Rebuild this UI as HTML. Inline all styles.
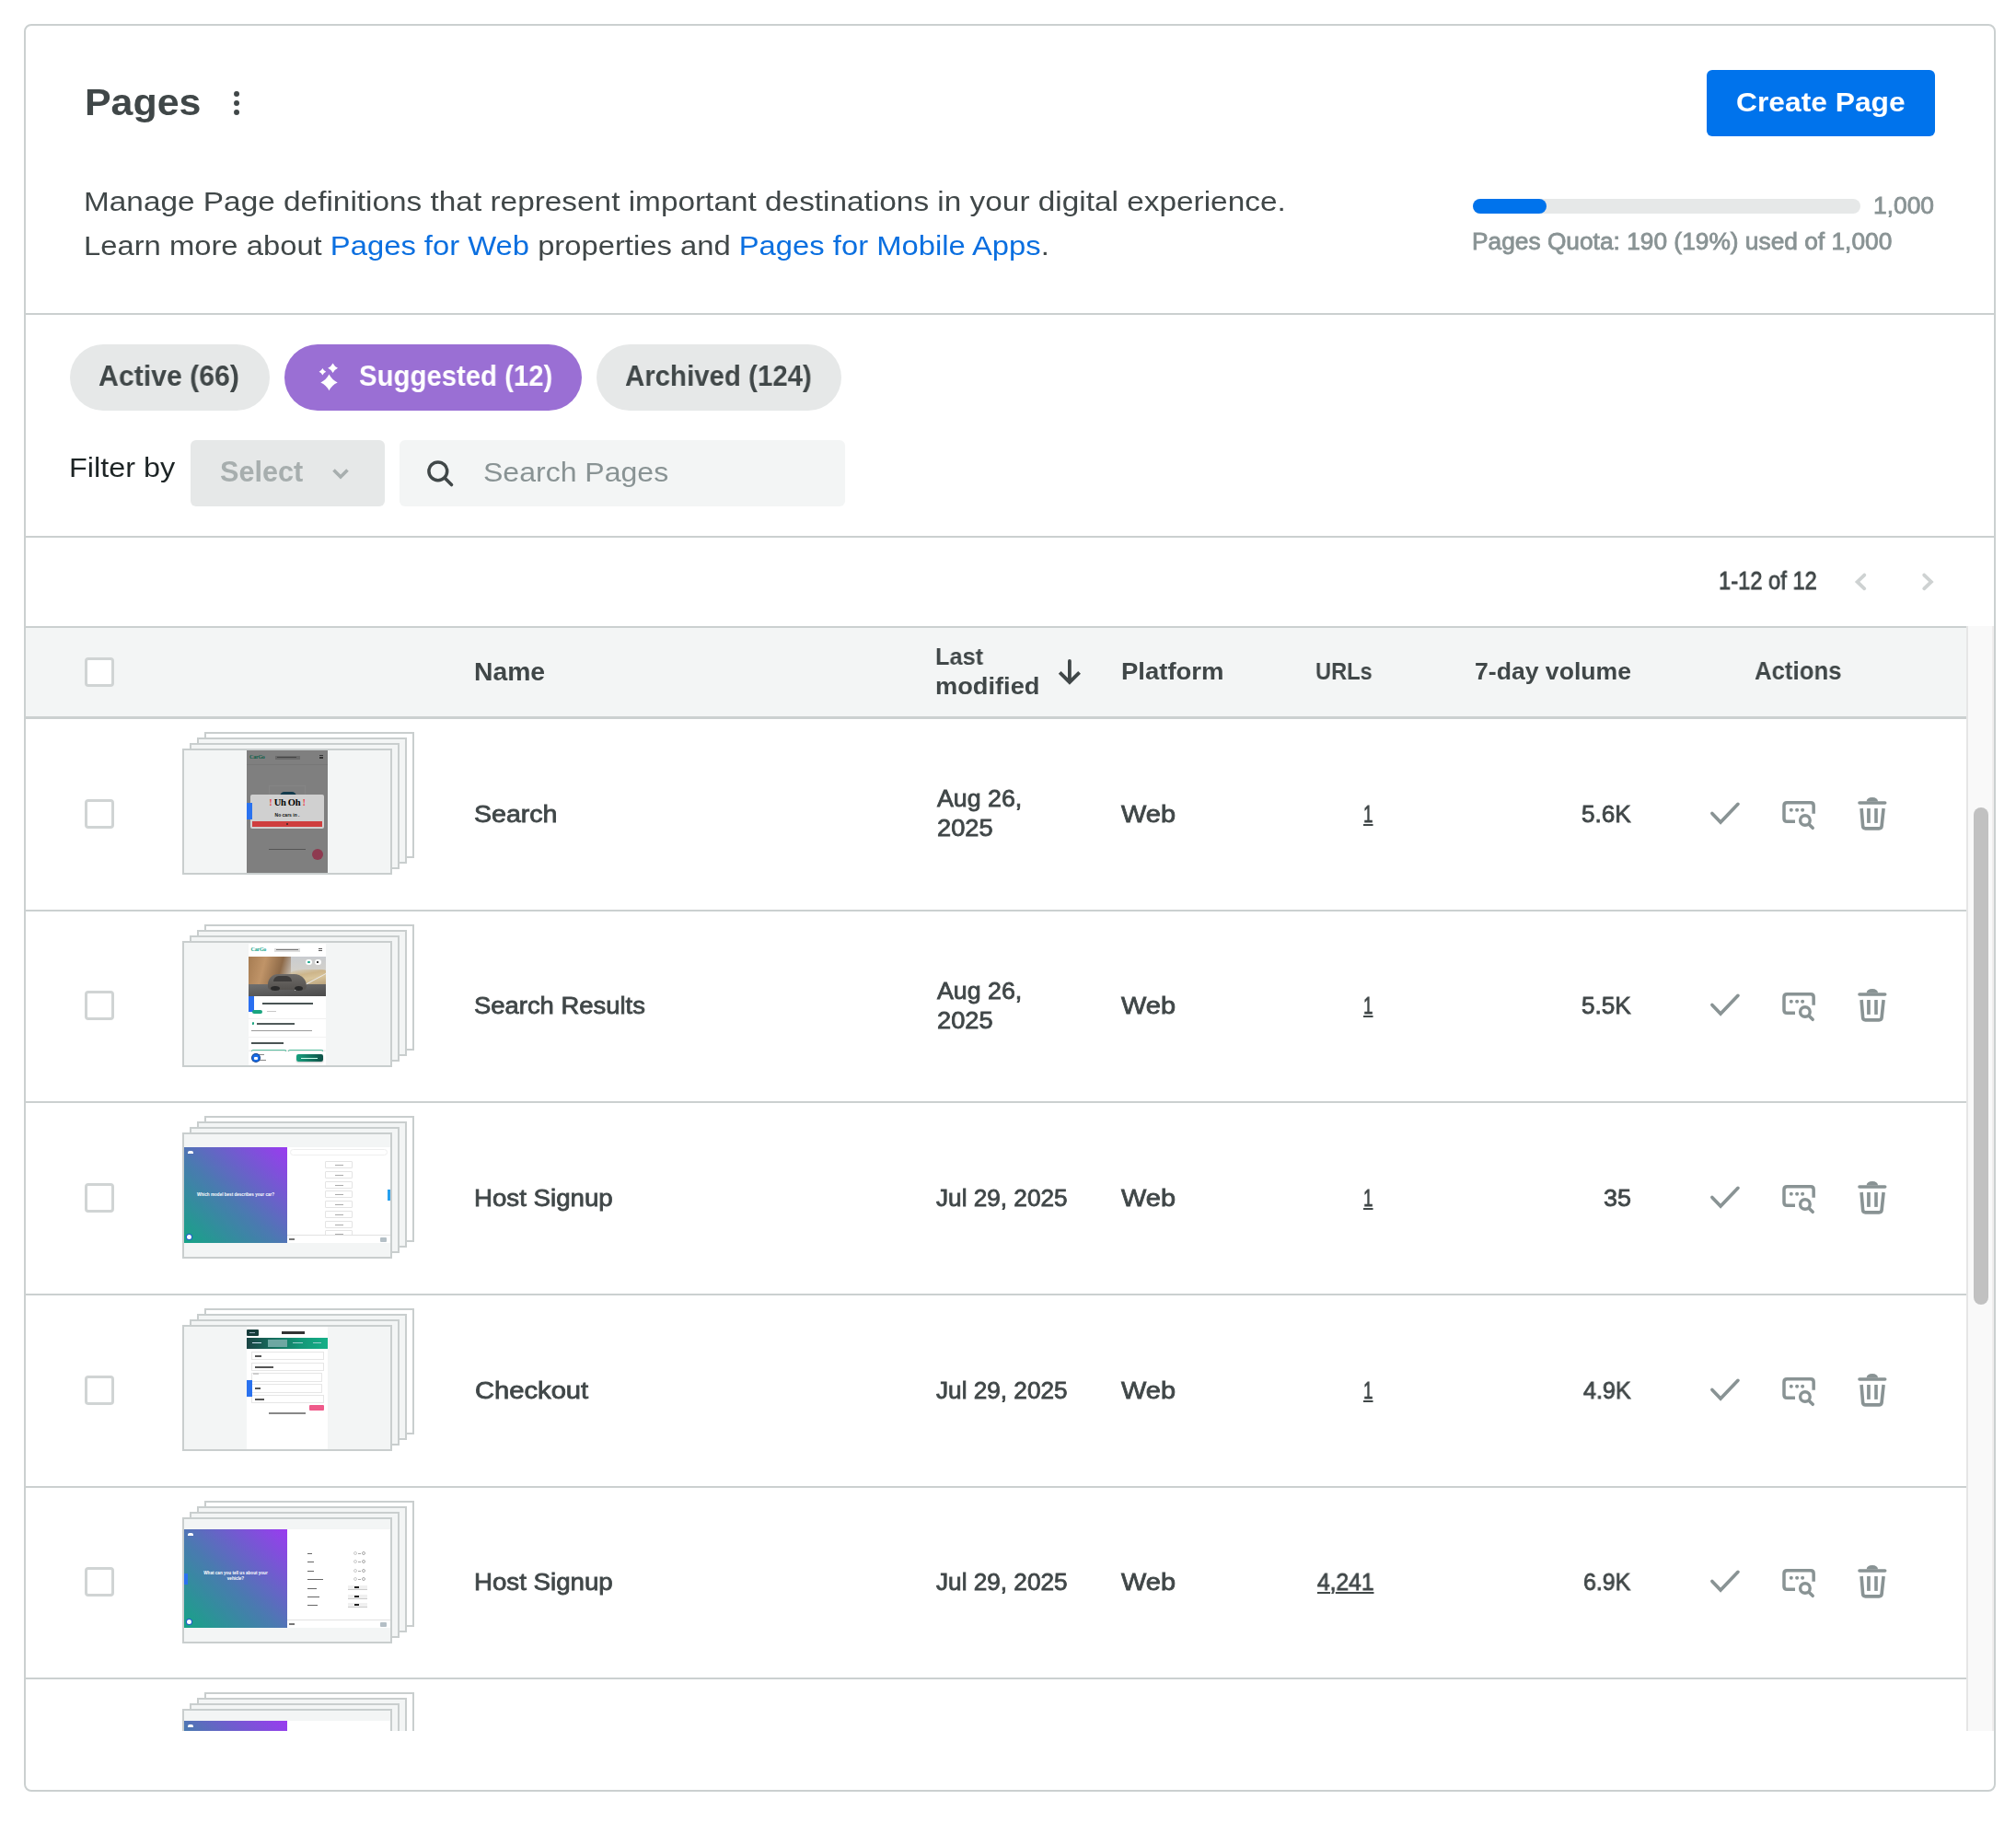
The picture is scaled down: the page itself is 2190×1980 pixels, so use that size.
<!DOCTYPE html><html><head><meta charset="utf-8"><style>
*{margin:0;padding:0;box-sizing:border-box}
html,body{width:2190px;height:1980px;background:#fff;overflow:hidden}
body{position:relative;font-family:"Liberation Sans",sans-serif}
.t{position:absolute;white-space:nowrap;font-kerning:normal;transform-origin:0 0;will-change:transform}
.box,.a,.fr,.dot,.cb,.hl{position:absolute}
#card{position:absolute;left:26px;top:26px;width:2142px;height:1920px;border:2px solid #cbd0d0;border-radius:8px}
.hl{left:28px;width:2138px;height:2px;background:#cbd0d0}
.dot{width:6.6px;height:6.6px;border-radius:50%;background:#404748}
.cb{width:32px;height:32px;border:3px solid #d0d4d4;border-radius:4px;background:#fff}
.fr{width:228px;height:137px;border:2px solid #c9cece;background:#f3f5f5;overflow:hidden}
.fr.main{background:#f3f5f5}
#sc{position:absolute;left:28px;top:680px;width:2138px;height:1200px;overflow:hidden}
</style></head><body><div id="card"></div><div class="hl" style="top:340px"></div><div class="hl" style="top:582px"></div><div class="dot" style="left:253.7px;top:98.5px"></div><div class="dot" style="left:253.7px;top:108.6px"></div><div class="dot" style="left:253.7px;top:118.5px"></div><div class="box" style="left:1854px;top:76px;width:248px;height:72px;background:#0073ec;border-radius:6px"></div><div class="box" style="left:1600px;top:216px;width:421px;height:16px;background:#e6e8e8;border-radius:8px"></div><div class="box" style="left:1600px;top:216px;width:80px;height:16px;background:#0073ec;border-radius:8px"></div><div class="box" style="left:76px;top:374px;width:217px;height:72px;background:#e6e8e8;border-radius:36px"></div><div class="box" style="left:309px;top:374px;width:323px;height:72px;background:#9a6fd4;border-radius:36px"></div><div class="box" style="left:648px;top:374px;width:266px;height:72px;background:#e6e8e8;border-radius:36px"></div><svg class="a" style="left:340px;top:390px" width="32" height="40" viewBox="0 0 32 40"><path d="M17.50 16.60 Q20.44 22.58 26.70 25.40 Q20.44 28.22 17.50 34.20 Q14.56 28.22 8.30 25.40 Q14.56 22.58 17.50 16.60Z M21.60 4.50 Q23.33 8.10 27.00 9.80 Q23.33 11.50 21.60 15.10 Q19.87 11.50 16.20 9.80 Q19.87 8.10 21.60 4.50Z M10.40 10.00 Q11.62 12.58 14.20 13.80 Q11.62 15.02 10.40 17.60 Q9.18 15.02 6.60 13.80 Q9.18 12.58 10.40 10.00Z" fill="#fff"/></svg><div class="box" style="left:207px;top:478px;width:211px;height:72px;background:#e6e8e8;border-radius:6px"></div><svg class="a" style="left:356px;top:500px" width="28" height="28" viewBox="0 0 28 28"><path d="M6.5 10.5 L14 18 L21.5 10.5" fill="none" stroke="#a7aeae" stroke-width="3.6"/></svg><div class="box" style="left:434px;top:478px;width:484px;height:72px;background:#f3f5f5;border-radius:6px"></div><svg class="a" style="left:460px;top:496px" width="36" height="36" viewBox="0 0 36 36"><circle cx="15.8" cy="15.8" r="9.9" fill="none" stroke="#404748" stroke-width="3.5"/><path d="M23 23 L30.5 30.5" stroke="#404748" stroke-width="3.6" stroke-linecap="round"/></svg><svg class="a" style="left:1140px;top:705px;z-index:5" width="45" height="50" viewBox="0 0 45 50"><path d="M21.9 13 V35" stroke="#404748" stroke-width="3.8" stroke-linecap="round"/><path d="M11.2 25.3 L21.9 36 L32.6 25.3" fill="none" stroke="#404748" stroke-width="3.9"/></svg><svg class="a" style="left:2004px;top:616px" width="32" height="32" viewBox="0 0 32 32"><path d="M21.3 8.6 L13.6 15.9 L21.3 23.3" fill="none" stroke="#ced2d2" stroke-width="3.8" stroke-linecap="round" stroke-linejoin="miter"/></svg><svg class="a" style="left:2078px;top:616px" width="32" height="32" viewBox="0 0 32 32"><path d="M12.2 8.6 L19.9 15.9 L12.2 23.3" fill="none" stroke="#ced2d2" stroke-width="3.8" stroke-linecap="round" stroke-linejoin="miter"/></svg><div id="sc"><div class="box" style="left:0;top:0;width:2108px;height:101px;background:#f3f5f5;border-top:2px solid #cbd0d0;border-bottom:3px solid #cbd0d0;box-sizing:border-box"></div><div class="cb" style="left:64px;top:34px"></div><div class="box" style="left:0;top:308.0px;width:2108px;height:2px;background:#cbd0d0"></div><div class="cb" style="left:64px;top:188px"></div><svg class="a" style="left:1826px;top:184px" width="40" height="40" viewBox="0 0 40 40"><path d="M5.9 19.4 L15.1 29.1 L34 9.3" fill="none" stroke="#899394" stroke-width="3.6" stroke-linecap="round" stroke-linejoin="miter"/></svg><svg class="a" style="left:1905px;top:190px" width="40" height="40" viewBox="0 0 40 40"><path d="M17 22.15 H8.2 Q5 22.15 5 18.9 V5.1 Q5 1.85 8.2 1.85 H33.9 Q37.15 1.85 37.15 5.1 V13.75" fill="none" stroke="#899394" stroke-width="3.5"/><circle cx="12.8" cy="9.8" r="2" fill="#899394"/><circle cx="19.1" cy="9.8" r="2" fill="#899394"/><circle cx="25.1" cy="9.8" r="2" fill="#899394"/><circle cx="27.9" cy="21" r="5.3" fill="none" stroke="#899394" stroke-width="3.4"/><path d="M32 25.2 L36.2 29.3" stroke="#899394" stroke-width="3.5" stroke-linecap="round"/></svg><svg class="a" style="left:1985px;top:185px" width="40" height="40" viewBox="0 0 40 40"><path d="M7 7 H34.7" stroke="#899394" stroke-width="3.6" stroke-linecap="round"/><path d="M14.6 5.5 Q15 1 20.9 1 Q26.6 1 27.1 5.5 Z" fill="#899394"/><path d="M9.1 13 L10.6 32.2 Q10.8 34.9 13.5 34.9 H28.2 Q30.9 34.9 31.1 32.2 L33.1 13" fill="none" stroke="#899394" stroke-width="3.6"/><rect x="15.1" y="13" width="3.7" height="15.9" fill="#899394"/><rect x="23.2" y="13" width="3.6" height="15.9" fill="#899394"/></svg><div class="fr" style="left:194.0px;top:115.0px;background:#ffffff"></div><div class="fr" style="left:186.0px;top:121.0px;background:#f3f5f5"></div><div class="fr" style="left:178.0px;top:127.0px;background:#f3f5f5"></div><div class="fr main" style="left:170.0px;top:133.0px"><div style="position:absolute;left:68px;top:0;width:88px;height:134px;background:#7f7f7f;overflow:hidden"><div style="position:absolute;left:3px;top:3.5px;font:bold 6px/7px 'Liberation Serif',serif;color:#0b5e47;letter-spacing:-0.2px">CarGo</div><div style="position:absolute;left:30.5px;top:5.5px;width:27.0px;height:4.5px;background:#6a6a6a"></div><div style="position:absolute;left:33.0px;top:7.0px;width:21.0px;height:1.2px;background:#444"></div><div style="position:absolute;left:79.4px;top:4.5px;width:4.0px;height:4.0px;background:repeating-linear-gradient(#333 0 1px,transparent 1px 1.6px)"></div><div style="position:absolute;left:0.0px;top:14.5px;width:88.0px;height:1.0px;background:#777"></div><div style="position:absolute;left:23.8px;top:37.8px;width:40.0px;height:34.0px;border:1px solid #858585"></div><div style="position:absolute;left:35.8px;top:45.0px;width:18.0px;height:5.0px;border-radius:5px 5px 0 0;background:#123a4c"></div><div style="position:absolute;left:4.0px;top:48.0px;width:79.6px;height:36.8px;background:#d0d0d0;border-radius:2px"></div><div style="position:absolute;left:4px;top:51px;width:80px;text-align:center;font:bold 10.5px/11px 'Liberation Serif',serif;color:#000;letter-spacing:-0.3px"><span style="color:#e8434c">! </span>Uh Oh<span style="color:#e8434c"> !</span></div><div style="position:absolute;left:4px;top:67px;width:80px;text-align:center;font:bold 5px/6px 'Liberation Sans',sans-serif;color:#111">No cars in .</div><div style="position:absolute;left:6.0px;top:76.8px;width:76.0px;height:6.0px;background:#cf3e3e"></div><div style="position:absolute;left:42.5px;top:78.5px;width:2.0px;height:2.5px;background:#5a2a2a"></div><div style="position:absolute;left:0.0px;top:57.4px;width:6.0px;height:17.8px;background:#2a72ef"></div><div style="position:absolute;left:24.0px;top:107.2px;width:40.0px;height:1.0px;background:#555"></div><div style="position:absolute;left:71.0px;top:107.0px;width:12.4px;height:12.4px;border-radius:50%;background:#8e3a50"></div></div></div><div class="box" style="left:0;top:516.0px;width:2108px;height:2px;background:#cbd0d0"></div><div class="cb" style="left:64px;top:396px"></div><svg class="a" style="left:1826px;top:392px" width="40" height="40" viewBox="0 0 40 40"><path d="M5.9 19.4 L15.1 29.1 L34 9.3" fill="none" stroke="#899394" stroke-width="3.6" stroke-linecap="round" stroke-linejoin="miter"/></svg><svg class="a" style="left:1905px;top:398px" width="40" height="40" viewBox="0 0 40 40"><path d="M17 22.15 H8.2 Q5 22.15 5 18.9 V5.1 Q5 1.85 8.2 1.85 H33.9 Q37.15 1.85 37.15 5.1 V13.75" fill="none" stroke="#899394" stroke-width="3.5"/><circle cx="12.8" cy="9.8" r="2" fill="#899394"/><circle cx="19.1" cy="9.8" r="2" fill="#899394"/><circle cx="25.1" cy="9.8" r="2" fill="#899394"/><circle cx="27.9" cy="21" r="5.3" fill="none" stroke="#899394" stroke-width="3.4"/><path d="M32 25.2 L36.2 29.3" stroke="#899394" stroke-width="3.5" stroke-linecap="round"/></svg><svg class="a" style="left:1985px;top:393px" width="40" height="40" viewBox="0 0 40 40"><path d="M7 7 H34.7" stroke="#899394" stroke-width="3.6" stroke-linecap="round"/><path d="M14.6 5.5 Q15 1 20.9 1 Q26.6 1 27.1 5.5 Z" fill="#899394"/><path d="M9.1 13 L10.6 32.2 Q10.8 34.9 13.5 34.9 H28.2 Q30.9 34.9 31.1 32.2 L33.1 13" fill="none" stroke="#899394" stroke-width="3.6"/><rect x="15.1" y="13" width="3.7" height="15.9" fill="#899394"/><rect x="23.2" y="13" width="3.6" height="15.9" fill="#899394"/></svg><div class="fr" style="left:194.0px;top:324.0px;background:#ffffff"></div><div class="fr" style="left:186.0px;top:330.0px;background:#f3f5f5"></div><div class="fr" style="left:178.0px;top:336.0px;background:#f3f5f5"></div><div class="fr main" style="left:170.0px;top:342.0px"><div style="position:absolute;left:70px;top:0.5px;width:84px;height:133px;background:#fff;overflow:hidden"><div style="position:absolute;left:2.5px;top:3.5px;font:bold 6px/7px 'Liberation Serif',serif;color:#13a58a;letter-spacing:-0.2px">CarGo</div><div style="position:absolute;left:27.8px;top:5.1px;width:28.5px;height:4.1px;background:#dedede"></div><div style="position:absolute;left:30.0px;top:6.6px;width:24.0px;height:1.1px;background:#777"></div><div style="position:absolute;left:76.0px;top:5.0px;width:4.0px;height:3.5px;background:repeating-linear-gradient(#555 0 1px,transparent 1px 1.5px)"></div><div style="position:absolute;left:0.0px;top:14.1px;width:84.0px;height:43.7px;background:linear-gradient(180deg,#c9ccd0 0%,#d6d2c8 45%,#8a8a88 62%,#5c5c5c 100%)"></div><div style="position:absolute;left:0.0px;top:14.1px;width:46.0px;height:32.0px;background:linear-gradient(105deg,#a67c52 0%,#c09468 35%,#8e6a48 70%,rgba(150,120,90,0) 100%)"></div><div style="position:absolute;left:44.0px;top:28.0px;width:40.0px;height:16.0px;background:linear-gradient(170deg,rgba(0,0,0,0) 0%,#cdb58a 35%,#d8c49a 60%,#b9a27c 100%);border-radius:40% 10% 0 0"></div><div style="position:absolute;left:0.0px;top:44.0px;width:84.0px;height:13.8px;background:linear-gradient(175deg,#707070,#4a4a4a)"></div><div style="position:absolute;left:50.0px;top:50.0px;width:40.0px;height:1.2px;background:#e8e8e8;transform:rotate(-28deg);transform-origin:0 0"></div><div style="position:absolute;left:21.0px;top:33.0px;width:42.0px;height:17.0px;border-radius:12px 14px 4px 4px;background:linear-gradient(180deg,#6e6b68,#55524f)"></div><div style="position:absolute;left:27.0px;top:35.0px;width:20.0px;height:6.0px;border-radius:6px 6px 0 0;background:#3e3c3b"></div><div style="position:absolute;left:24.0px;top:46.0px;width:10.0px;height:5.0px;border-radius:50%;background:#2a2a2a"></div><div style="position:absolute;left:50.0px;top:46.0px;width:9.0px;height:5.0px;border-radius:50%;background:#2a2a2a"></div><div style="position:absolute;left:62.0px;top:17.0px;width:6.5px;height:6.5px;border-radius:50%;background:#fff"></div><div style="position:absolute;left:72.0px;top:17.0px;width:6.5px;height:6.5px;border-radius:50%;background:#fff"></div><div style="position:absolute;left:64.0px;top:19.0px;width:2.5px;height:2.0px;background:#13a58a;border-radius:1px"></div><div style="position:absolute;left:74.2px;top:19.0px;width:2.0px;height:2.5px;background:#333"></div><div style="position:absolute;left:0.0px;top:57.4px;width:6.0px;height:17.4px;background:#2a6ff0"></div><div style="position:absolute;left:14.8px;top:64.8px;width:55.0px;height:2.2px;background:#4a5454"></div><div style="position:absolute;left:4.0px;top:72.0px;width:11.0px;height:4.0px;border-radius:2px;background:#1aa57f"></div><div style="position:absolute;left:20.0px;top:73.5px;width:10.0px;height:1.2px;background:#c8c8c8"></div><div style="position:absolute;left:0.0px;top:81.0px;width:84.0px;height:1.0px;background:#f0f0f0"></div><div style="position:absolute;left:3.7px;top:85.8px;width:2.5px;height:3.0px;background:#1aa57f;border-radius:50% 50% 50% 0"></div><div style="position:absolute;left:9.0px;top:86.4px;width:41.0px;height:2.0px;background:#505a5a"></div><div style="position:absolute;left:3.0px;top:94.8px;width:66.0px;height:1.2px;background:#9a9a9a"></div><div style="position:absolute;left:0.0px;top:101.4px;width:84.0px;height:1.0px;background:#f3f3f3"></div><div style="position:absolute;left:3.0px;top:107.8px;width:35.0px;height:2.0px;background:#4a5454"></div><div style="position:absolute;left:3.0px;top:115.5px;width:38.0px;height:3.0px;border:1px solid #5cc8a8;border-bottom:none;border-radius:2px 2px 0 0"></div><div style="position:absolute;left:43.0px;top:115.5px;width:38.0px;height:3.0px;border:1px solid #5cc8a8;border-bottom:none;border-radius:2px 2px 0 0"></div><div style="position:absolute;left:0.0px;top:117.5px;width:84.0px;height:16.0px;background:#fff;box-shadow:0 -1px 2px rgba(0,0,0,0.12)"></div><div style="position:absolute;left:51.9px;top:120.2px;width:28.8px;height:8.7px;border-radius:2px;background:linear-gradient(90deg,#16a07e,#0e5046);box-shadow:0 1px 2px rgba(0,0,0,.25)"></div><div style="position:absolute;left:57.0px;top:124.0px;width:18.0px;height:1.2px;background:#cfe"></div><div style="position:absolute;left:11.0px;top:120.5px;width:6.0px;height:1.0px;background:#888"></div><div style="position:absolute;left:11.0px;top:126.5px;width:8.0px;height:1.0px;background:#888"></div><div style="position:absolute;left:3.7px;top:120.8px;width:8.0px;height:8.0px;border-radius:50%;background:#1a6ee8;box-shadow:0 0 0 1px #0d3d8a"></div><div style="position:absolute;left:6.0px;top:123.0px;width:3.5px;height:3.5px;background:#fff;border-radius:1px"></div></div></div><div class="box" style="left:0;top:725.0px;width:2108px;height:2px;background:#cbd0d0"></div><div class="cb" style="left:64px;top:605px"></div><svg class="a" style="left:1826px;top:601px" width="40" height="40" viewBox="0 0 40 40"><path d="M5.9 19.4 L15.1 29.1 L34 9.3" fill="none" stroke="#899394" stroke-width="3.6" stroke-linecap="round" stroke-linejoin="miter"/></svg><svg class="a" style="left:1905px;top:607px" width="40" height="40" viewBox="0 0 40 40"><path d="M17 22.15 H8.2 Q5 22.15 5 18.9 V5.1 Q5 1.85 8.2 1.85 H33.9 Q37.15 1.85 37.15 5.1 V13.75" fill="none" stroke="#899394" stroke-width="3.5"/><circle cx="12.8" cy="9.8" r="2" fill="#899394"/><circle cx="19.1" cy="9.8" r="2" fill="#899394"/><circle cx="25.1" cy="9.8" r="2" fill="#899394"/><circle cx="27.9" cy="21" r="5.3" fill="none" stroke="#899394" stroke-width="3.4"/><path d="M32 25.2 L36.2 29.3" stroke="#899394" stroke-width="3.5" stroke-linecap="round"/></svg><svg class="a" style="left:1985px;top:602px" width="40" height="40" viewBox="0 0 40 40"><path d="M7 7 H34.7" stroke="#899394" stroke-width="3.6" stroke-linecap="round"/><path d="M14.6 5.5 Q15 1 20.9 1 Q26.6 1 27.1 5.5 Z" fill="#899394"/><path d="M9.1 13 L10.6 32.2 Q10.8 34.9 13.5 34.9 H28.2 Q30.9 34.9 31.1 32.2 L33.1 13" fill="none" stroke="#899394" stroke-width="3.6"/><rect x="15.1" y="13" width="3.7" height="15.9" fill="#899394"/><rect x="23.2" y="13" width="3.6" height="15.9" fill="#899394"/></svg><div class="fr" style="left:194.0px;top:532.0px;background:#ffffff"></div><div class="fr" style="left:186.0px;top:538.0px;background:#f3f5f5"></div><div class="fr" style="left:178.0px;top:544.0px;background:#f3f5f5"></div><div class="fr main" style="left:170.0px;top:550.0px"><div style="position:absolute;left:0;top:14px;width:225px;height:104px;background:#fff;overflow:hidden"><div style="position:absolute;left:115px;top:2px;width:106px;height:7px;border:1px solid #eee;border-radius:4px"></div><div style="position:absolute;left:153px;top:15.0px;width:30px;height:8px;border:1px solid #e4e4e4;border-radius:1px;background:#fff"><div style="margin:3px auto 0;width:9px;height:1px;background:#aaa"></div></div><div style="position:absolute;left:153px;top:25.8px;width:30px;height:8px;border:1px solid #e4e4e4;border-radius:1px;background:#fff"><div style="margin:3px auto 0;width:9px;height:1px;background:#aaa"></div></div><div style="position:absolute;left:153px;top:36.5px;width:30px;height:8px;border:1px solid #e4e4e4;border-radius:1px;background:#fff"><div style="margin:3px auto 0;width:9px;height:1px;background:#aaa"></div></div><div style="position:absolute;left:153px;top:47.2px;width:30px;height:8px;border:1px solid #e4e4e4;border-radius:1px;background:#fff"><div style="margin:3px auto 0;width:9px;height:1px;background:#aaa"></div></div><div style="position:absolute;left:153px;top:58.0px;width:30px;height:8px;border:1px solid #e4e4e4;border-radius:1px;background:#fff"><div style="margin:3px auto 0;width:9px;height:1px;background:#aaa"></div></div><div style="position:absolute;left:153px;top:68.8px;width:30px;height:8px;border:1px solid #e4e4e4;border-radius:1px;background:#fff"><div style="margin:3px auto 0;width:9px;height:1px;background:#aaa"></div></div><div style="position:absolute;left:153px;top:79.5px;width:30px;height:8px;border:1px solid #e4e4e4;border-radius:1px;background:#fff"><div style="margin:3px auto 0;width:9px;height:1px;background:#aaa"></div></div><div style="position:absolute;left:153px;top:90.2px;width:30px;height:8px;border:1px solid #e4e4e4;border-radius:1px;background:#fff"><div style="margin:3px auto 0;width:9px;height:1px;background:#aaa"></div></div><div style="position:absolute;left:221px;top:46px;width:4px;height:12px;background:#27a0ee"></div><div style="position:absolute;left:112px;top:95px;width:113px;height:1px;background:#e2e2e2"></div><div style="position:absolute;left:112px;top:96px;width:113px;height:9px;background:#fff"></div><div style="position:absolute;left:114px;top:99px;width:6px;height:2px;background:#777"></div><div style="position:absolute;left:213px;top:98px;width:7px;height:5px;border-radius:1px;background:#b4bfc6"></div></div><div style="position:absolute;left:0;top:14px;width:112px;height:104px;background:linear-gradient(to top right,#16a486 0%,#4a7ab0 45%,#9a3bf0 100%)"><div style="position:absolute;left:4px;top:4px;width:6px;height:3px;border-radius:2px 2px 0 0;background:#fff"></div><div style="position:absolute;left:0;top:49px;width:112px;text-align:center;font:bold 4.6px/5.6px 'Liberation Sans',sans-serif;color:#fff">Which model best describes your car?</div><div style="position:absolute;left:3px;top:95px;width:5px;height:5px;border-radius:50%;background:#fff;box-shadow:0 0 0 1px #1e5ad0"></div></div></div><div class="box" style="left:0;top:934.0px;width:2108px;height:2px;background:#cbd0d0"></div><div class="cb" style="left:64px;top:814px"></div><svg class="a" style="left:1826px;top:810px" width="40" height="40" viewBox="0 0 40 40"><path d="M5.9 19.4 L15.1 29.1 L34 9.3" fill="none" stroke="#899394" stroke-width="3.6" stroke-linecap="round" stroke-linejoin="miter"/></svg><svg class="a" style="left:1905px;top:816px" width="40" height="40" viewBox="0 0 40 40"><path d="M17 22.15 H8.2 Q5 22.15 5 18.9 V5.1 Q5 1.85 8.2 1.85 H33.9 Q37.15 1.85 37.15 5.1 V13.75" fill="none" stroke="#899394" stroke-width="3.5"/><circle cx="12.8" cy="9.8" r="2" fill="#899394"/><circle cx="19.1" cy="9.8" r="2" fill="#899394"/><circle cx="25.1" cy="9.8" r="2" fill="#899394"/><circle cx="27.9" cy="21" r="5.3" fill="none" stroke="#899394" stroke-width="3.4"/><path d="M32 25.2 L36.2 29.3" stroke="#899394" stroke-width="3.5" stroke-linecap="round"/></svg><svg class="a" style="left:1985px;top:811px" width="40" height="40" viewBox="0 0 40 40"><path d="M7 7 H34.7" stroke="#899394" stroke-width="3.6" stroke-linecap="round"/><path d="M14.6 5.5 Q15 1 20.9 1 Q26.6 1 27.1 5.5 Z" fill="#899394"/><path d="M9.1 13 L10.6 32.2 Q10.8 34.9 13.5 34.9 H28.2 Q30.9 34.9 31.1 32.2 L33.1 13" fill="none" stroke="#899394" stroke-width="3.6"/><rect x="15.1" y="13" width="3.7" height="15.9" fill="#899394"/><rect x="23.2" y="13" width="3.6" height="15.9" fill="#899394"/></svg><div class="fr" style="left:194.0px;top:741.0px;background:#ffffff"></div><div class="fr" style="left:186.0px;top:747.0px;background:#f3f5f5"></div><div class="fr" style="left:178.0px;top:753.0px;background:#f3f5f5"></div><div class="fr main" style="left:170.0px;top:759.0px"><div style="position:absolute;left:68px;top:0;width:88px;height:134px;background:#fff;overflow:hidden"><div style="position:absolute;left:0;top:3px;width:13px;height:7px;border-radius:1px;background:#163c3a"><div style="margin:3px 3px;width:6px;height:1px;background:#9ab"></div></div><div style="position:absolute;left:38px;top:5px;width:25px;height:3px;background:#333"></div><div style="position:absolute;left:0;top:11.7px;width:88px;height:12.5px;background:linear-gradient(90deg,#1a4444,#139677 65%,#16b088)"></div><div style="position:absolute;left:22.5px;top:13.8px;width:21.5px;height:8.6px;background:#6ea7a2"></div><div style="position:absolute;left:6px;top:17px;width:10px;height:1px;background:#cde"></div><div style="position:absolute;left:50px;top:17px;width:11px;height:1px;background:#9cc"></div><div style="position:absolute;left:72px;top:17px;width:9px;height:1px;background:#9cc"></div><div style="position:absolute;left:4.5px;top:26.8px;width:79px;height:9.7px;border:1px solid #e6e6e6;background:#fff"><div style="position:absolute;left:3px;top:3.5px;width:7px;height:1.5px;background:#555"></div></div><div style="position:absolute;left:4.5px;top:38.5px;width:79px;height:9.7px;border:1px solid #e6e6e6;background:#fff"><div style="position:absolute;left:3px;top:3.5px;width:20px;height:1.5px;background:#555"></div></div><div style="position:absolute;left:4.5px;top:50.2px;width:77px;height:9.7px;border:1px solid #e6e6e6;background:#fff"><div style="position:absolute;left:3px;top:3.5px;width:0px;height:1.5px;background:#555"></div></div><div style="position:absolute;left:4.5px;top:61.9px;width:77px;height:9.7px;border:1px solid #e6e6e6;background:#fff"><div style="position:absolute;left:3px;top:3.5px;width:6px;height:1.5px;background:#555"></div></div><div style="position:absolute;left:4.5px;top:73.6px;width:79px;height:9.7px;border:1px solid #e6e6e6;background:#fff"><div style="position:absolute;left:3px;top:3.5px;width:10px;height:1.5px;background:#555"></div></div><div style="position:absolute;left:7px;top:50px;width:6px;height:2px;background:#ccc"></div><div style="position:absolute;left:0;top:58px;width:6px;height:18px;background:#2a72ef"></div><div style="position:absolute;left:68px;top:85.3px;width:16px;height:6px;border-radius:1px;background:#ef5a8a"></div><div style="position:absolute;left:24px;top:93px;width:40px;height:2px;background:#888"></div></div></div><div class="box" style="left:0;top:1142.0px;width:2108px;height:2px;background:#cbd0d0"></div><div class="cb" style="left:64px;top:1022px"></div><svg class="a" style="left:1826px;top:1018px" width="40" height="40" viewBox="0 0 40 40"><path d="M5.9 19.4 L15.1 29.1 L34 9.3" fill="none" stroke="#899394" stroke-width="3.6" stroke-linecap="round" stroke-linejoin="miter"/></svg><svg class="a" style="left:1905px;top:1024px" width="40" height="40" viewBox="0 0 40 40"><path d="M17 22.15 H8.2 Q5 22.15 5 18.9 V5.1 Q5 1.85 8.2 1.85 H33.9 Q37.15 1.85 37.15 5.1 V13.75" fill="none" stroke="#899394" stroke-width="3.5"/><circle cx="12.8" cy="9.8" r="2" fill="#899394"/><circle cx="19.1" cy="9.8" r="2" fill="#899394"/><circle cx="25.1" cy="9.8" r="2" fill="#899394"/><circle cx="27.9" cy="21" r="5.3" fill="none" stroke="#899394" stroke-width="3.4"/><path d="M32 25.2 L36.2 29.3" stroke="#899394" stroke-width="3.5" stroke-linecap="round"/></svg><svg class="a" style="left:1985px;top:1019px" width="40" height="40" viewBox="0 0 40 40"><path d="M7 7 H34.7" stroke="#899394" stroke-width="3.6" stroke-linecap="round"/><path d="M14.6 5.5 Q15 1 20.9 1 Q26.6 1 27.1 5.5 Z" fill="#899394"/><path d="M9.1 13 L10.6 32.2 Q10.8 34.9 13.5 34.9 H28.2 Q30.9 34.9 31.1 32.2 L33.1 13" fill="none" stroke="#899394" stroke-width="3.6"/><rect x="15.1" y="13" width="3.7" height="15.9" fill="#899394"/><rect x="23.2" y="13" width="3.6" height="15.9" fill="#899394"/></svg><div class="fr" style="left:194.0px;top:950.0px;background:#ffffff"></div><div class="fr" style="left:186.0px;top:956.0px;background:#f3f5f5"></div><div class="fr" style="left:178.0px;top:962.0px;background:#f3f5f5"></div><div class="fr main" style="left:170.0px;top:968.0px"><div style="position:absolute;left:0;top:11px;width:225px;height:107px;background:#fff;overflow:hidden"><div style="position:absolute;left:134px;top:26.0px;width:5px;height:1px;background:#666"></div><div style="position:absolute;left:184px;top:24.0px;width:4px;height:4px;border:1px solid #ccc;border-radius:50%"></div><div style="position:absolute;left:189px;top:26.0px;width:3px;height:1px;background:#aaa"></div><div style="position:absolute;left:193px;top:24.0px;width:4px;height:4px;border:1px solid #aaa;border-radius:50%"></div><div style="position:absolute;left:134px;top:35.4px;width:7px;height:1px;background:#666"></div><div style="position:absolute;left:184px;top:33.4px;width:4px;height:4px;border:1px solid #ccc;border-radius:50%"></div><div style="position:absolute;left:189px;top:35.4px;width:3px;height:1px;background:#aaa"></div><div style="position:absolute;left:193px;top:33.4px;width:4px;height:4px;border:1px solid #aaa;border-radius:50%"></div><div style="position:absolute;left:134px;top:44.8px;width:7px;height:1px;background:#666"></div><div style="position:absolute;left:184px;top:42.8px;width:4px;height:4px;border:1px solid #ccc;border-radius:50%"></div><div style="position:absolute;left:189px;top:44.8px;width:3px;height:1px;background:#aaa"></div><div style="position:absolute;left:193px;top:42.8px;width:4px;height:4px;border:1px solid #aaa;border-radius:50%"></div><div style="position:absolute;left:134px;top:54.2px;width:17px;height:1px;background:#666"></div><div style="position:absolute;left:184px;top:52.2px;width:4px;height:4px;border:1px solid #ccc;border-radius:50%"></div><div style="position:absolute;left:189px;top:54.2px;width:3px;height:1px;background:#aaa"></div><div style="position:absolute;left:193px;top:52.2px;width:4px;height:4px;border:1px solid #aaa;border-radius:50%"></div><div style="position:absolute;left:134px;top:63.6px;width:10px;height:1px;background:#666"></div><div style="position:absolute;left:178px;top:61.1px;width:21px;height:5px;background:#f0f0f0;border-bottom:1px solid #ccc"><div style="position:absolute;left:7px;top:1px;width:5px;height:2px;background:#222"></div></div><div style="position:absolute;left:134px;top:73.0px;width:13px;height:1px;background:#666"></div><div style="position:absolute;left:178px;top:70.5px;width:21px;height:5px;background:#f0f0f0;border-bottom:1px solid #ccc"><div style="position:absolute;left:7px;top:1px;width:5px;height:2px;background:#222"></div></div><div style="position:absolute;left:134px;top:82.4px;width:11px;height:1px;background:#666"></div><div style="position:absolute;left:178px;top:79.9px;width:21px;height:5px;background:#f0f0f0;border-bottom:1px solid #ccc"><div style="position:absolute;left:7px;top:1px;width:5px;height:2px;background:#222"></div></div><div style="position:absolute;left:112px;top:98px;width:113px;height:1px;background:#e2e2e2"></div><div style="position:absolute;left:112px;top:99px;width:113px;height:9px;background:#fff"></div><div style="position:absolute;left:114px;top:102px;width:6px;height:2px;background:#777"></div><div style="position:absolute;left:213px;top:101px;width:7px;height:5px;border-radius:1px;background:#b4bfc6"></div></div><div style="position:absolute;left:0;top:11px;width:112px;height:107px;background:linear-gradient(to top right,#16a486 0%,#4a7ab0 45%,#9a3bf0 100%)"><div style="position:absolute;left:4px;top:4px;width:6px;height:3px;border-radius:2px 2px 0 0;background:#fff"></div><div style="position:absolute;left:0;top:45px;width:112px;text-align:center;font:bold 4.6px/5.6px 'Liberation Sans',sans-serif;color:#fff">What can you tell us about your<br>vehicle?</div><div style="position:absolute;left:3px;top:98px;width:5px;height:5px;border-radius:50%;background:#fff;box-shadow:0 0 0 1px #1e5ad0"></div></div><div style="position:absolute;left:0;top:59px;width:4px;height:12px;background:#2a72ef"></div></div><div class="fr" style="left:194.0px;top:1158.0px;background:#ffffff"></div><div class="fr" style="left:186.0px;top:1164.0px;background:#f3f5f5"></div><div class="fr" style="left:178.0px;top:1170.0px;background:#f3f5f5"></div><div class="fr main" style="left:170.0px;top:1176.0px"><div style="position:absolute;left:0;top:11px;width:225px;height:107px;background:#fff;overflow:hidden"><div style="position:absolute;left:112px;top:98px;width:113px;height:1px;background:#e2e2e2"></div><div style="position:absolute;left:112px;top:99px;width:113px;height:9px;background:#fff"></div><div style="position:absolute;left:114px;top:102px;width:6px;height:2px;background:#777"></div><div style="position:absolute;left:213px;top:101px;width:7px;height:5px;border-radius:1px;background:#b4bfc6"></div></div><div style="position:absolute;left:0;top:11px;width:112px;height:107px;background:linear-gradient(to top right,#16a486 0%,#4a7ab0 45%,#9a3bf0 100%)"><div style="position:absolute;left:4px;top:4px;width:6px;height:3px;border-radius:2px 2px 0 0;background:#fff"></div><div style="position:absolute;left:0;top:46px;width:112px;text-align:center;font:bold 4.6px/5.6px 'Liberation Sans',sans-serif;color:#fff"></div><div style="position:absolute;left:3px;top:98px;width:5px;height:5px;border-radius:50%;background:#fff;box-shadow:0 0 0 1px #1e5ad0"></div></div></div><div class="box" style="left:2108px;top:0;width:30px;height:1200px;background:#f9f9f9;border-left:2px solid #e6e6e6;border-right:2px solid #efeded;box-sizing:border-box"></div><div class="box" style="left:2116px;top:197px;width:16px;height:540px;background:#c1c1c1;border-radius:8px"></div></div><div class="t" id="title" style="left:91.73px;top:89.63px;font-size:41.43px;line-height:41.43px;font-weight:700;color:#404748;letter-spacing:0.000px;transform:scaleX(1.0357);">Pages</div><div class="t" id="desc1" style="left:91.30px;top:203.92px;font-size:29.51px;line-height:29.51px;font-weight:400;color:#404748;letter-spacing:0.000px;transform:scaleX(1.1310);">Manage Page definitions that represent important destinations in your digital experience.</div><div class="t" id="desc2" style="left:91.30px;top:251.89px;font-size:29.65px;line-height:29.65px;font-weight:400;color:#404748;letter-spacing:0.000px;transform:scaleX(1.1057);">Learn more about <span style="color:#0a6fe0">Pages for Web</span> properties and <span style="color:#0a6fe0">Pages for Mobile Apps</span>.</div><div class="t" id="create" style="left:1886.10px;top:96.32px;font-size:29.51px;line-height:29.51px;font-weight:700;color:#ffffff;letter-spacing:0.000px;transform:scaleX(1.0769);">Create Page</div><div class="t" id="k1000" style="left:2035.06px;top:209.75px;font-size:26.16px;line-height:26.16px;font-weight:400;color:#899394;letter-spacing:0.000px;transform:scaleX(1.0082);-webkit-text-stroke:0.8px #899394;">1,000</div><div class="t" id="quota" style="left:1599.01px;top:250.12px;font-size:25.73px;line-height:25.73px;font-weight:400;color:#899394;letter-spacing:0.000px;transform:scaleX(1.0228);-webkit-text-stroke:0.8px #899394;">Pages Quota: 190 (19%) used of 1,000</div><div class="t" id="pActive" style="left:106.96px;top:393.13px;font-size:30.67px;line-height:30.67px;font-weight:700;color:#404748;letter-spacing:0.000px;transform:scaleX(0.9863);">Active (66)</div><div class="t" id="pSugg" style="left:389.67px;top:393.03px;font-size:30.67px;line-height:30.67px;font-weight:700;color:#ffffff;letter-spacing:0.000px;transform:scaleX(0.9569);">Suggested (12)</div><div class="t" id="pArch" style="left:678.96px;top:392.76px;font-size:31.11px;line-height:31.11px;font-weight:700;color:#404748;letter-spacing:0.000px;transform:scaleX(0.9456);">Archived (124)</div><div class="t" id="filter" style="left:75.30px;top:493.43px;font-size:30.09px;line-height:30.09px;font-weight:400;color:#1d2425;letter-spacing:0.000px;transform:scaleX(1.0773);">Filter by</div><div class="t" id="select" style="left:239.10px;top:496.86px;font-size:30.52px;line-height:30.52px;font-weight:700;color:#a7aeae;letter-spacing:0.000px;transform:scaleX(1.0046);">Select</div><div class="t" id="search" style="left:524.82px;top:498.20px;font-size:30.23px;line-height:30.23px;font-weight:400;color:#899394;letter-spacing:0.000px;transform:scaleX(1.0596);">Search Pages</div><div class="t" id="pag" style="left:1866.63px;top:617.26px;font-size:27.33px;line-height:27.33px;font-weight:400;color:#404748;letter-spacing:0.000px;transform:scaleX(0.8675);-webkit-text-stroke:0.8px #404748;">1-12 of 12</div><div class="t" id="hName" style="left:515.20px;top:715.62px;font-size:27.62px;line-height:27.62px;font-weight:700;color:#404748;letter-spacing:0.000px;transform:scaleX(1.0252);">Name</div><div class="t" id="hLast" style="left:1016.25px;top:699.75px;font-size:26.16px;line-height:26.16px;font-weight:700;color:#404748;letter-spacing:0.000px;transform:scaleX(0.9697);">Last</div><div class="t" id="hMod" style="left:1016.25px;top:731.62px;font-size:26.20px;line-height:26.20px;font-weight:700;color:#404748;letter-spacing:0.000px;transform:scaleX(1.0397);">modified</div><div class="t" id="hPlat" style="left:1217.58px;top:715.78px;font-size:26.60px;line-height:26.60px;font-weight:700;color:#404748;letter-spacing:0.000px;transform:scaleX(1.0335);">Platform</div><div class="t" id="hUrls" style="left:1429.34px;top:715.78px;font-size:26.60px;line-height:26.60px;font-weight:700;color:#404748;letter-spacing:0.000px;transform:scaleX(0.8869);">URLs</div><div class="t" id="hVol" style="left:1602.10px;top:715.78px;font-size:26.60px;line-height:26.60px;font-weight:700;color:#404748;letter-spacing:0.000px;transform:scaleX(0.9977);">7-day volume</div><div class="t" id="hAct" style="left:1906.10px;top:714.94px;font-size:27.47px;line-height:27.47px;font-weight:700;color:#404748;letter-spacing:0.000px;transform:scaleX(0.9375);">Actions</div><div class="t" id="n0" style="left:514.82px;top:870.55px;font-size:26.16px;line-height:26.16px;font-weight:400;color:#404748;letter-spacing:0.000px;transform:scaleX(1.0914);-webkit-text-stroke:0.8px #404748;">Search</div><div class="t" id="d0a" style="left:1017.62px;top:855.09px;font-size:25.87px;line-height:25.87px;font-weight:400;color:#404748;letter-spacing:0.000px;transform:scaleX(1.0345);-webkit-text-stroke:0.8px #404748;">Aug 26,</div><div class="t" id="d0b" style="left:1017.67px;top:886.05px;font-size:26.16px;line-height:26.16px;font-weight:400;color:#404748;letter-spacing:0.000px;transform:scaleX(1.0408);-webkit-text-stroke:0.8px #404748;">2025</div><div class="t" id="w0" style="left:1218.05px;top:870.55px;font-size:26.16px;line-height:26.16px;font-weight:400;color:#404748;letter-spacing:0.000px;transform:scaleX(1.1062);-webkit-text-stroke:0.8px #404748;">Web</div><div class="t" id="u0" style="left:1480.72px;top:870.55px;font-size:26.16px;line-height:26.16px;font-weight:400;color:#404748;letter-spacing:0.000px;transform:scaleX(0.7153);-webkit-text-stroke:0.8px #404748;text-decoration:underline;text-decoration-thickness:2px;text-underline-offset:2px;">1</div><div class="t" id="v0" style="left:1718.48px;top:870.55px;font-size:26.16px;line-height:26.16px;font-weight:400;color:#404748;letter-spacing:0.000px;transform:scaleX(0.9928);-webkit-text-stroke:0.8px #404748;">5.6K</div><div class="t" id="n1" style="left:514.82px;top:1079.05px;font-size:26.16px;line-height:26.16px;font-weight:400;color:#404748;letter-spacing:0.000px;transform:scaleX(1.0481);-webkit-text-stroke:0.8px #404748;">Search Results</div><div class="t" id="d1a" style="left:1017.62px;top:1063.59px;font-size:25.87px;line-height:25.87px;font-weight:400;color:#404748;letter-spacing:0.000px;transform:scaleX(1.0345);-webkit-text-stroke:0.8px #404748;">Aug 26,</div><div class="t" id="d1b" style="left:1017.67px;top:1094.55px;font-size:26.16px;line-height:26.16px;font-weight:400;color:#404748;letter-spacing:0.000px;transform:scaleX(1.0408);-webkit-text-stroke:0.8px #404748;">2025</div><div class="t" id="w1" style="left:1218.05px;top:1079.05px;font-size:26.16px;line-height:26.16px;font-weight:400;color:#404748;letter-spacing:0.000px;transform:scaleX(1.1062);-webkit-text-stroke:0.8px #404748;">Web</div><div class="t" id="u1" style="left:1480.72px;top:1079.05px;font-size:26.16px;line-height:26.16px;font-weight:400;color:#404748;letter-spacing:0.000px;transform:scaleX(0.7153);-webkit-text-stroke:0.8px #404748;text-decoration:underline;text-decoration-thickness:2px;text-underline-offset:2px;">1</div><div class="t" id="v1" style="left:1718.48px;top:1079.05px;font-size:26.16px;line-height:26.16px;font-weight:400;color:#404748;letter-spacing:0.000px;transform:scaleX(0.9928);-webkit-text-stroke:0.8px #404748;">5.5K</div><div class="t" id="n2" style="left:514.82px;top:1287.55px;font-size:26.16px;line-height:26.16px;font-weight:400;color:#404748;letter-spacing:0.000px;transform:scaleX(1.0576);-webkit-text-stroke:0.8px #404748;">Host Signup</div><div class="t" id="d2" style="left:1016.91px;top:1287.55px;font-size:26.16px;line-height:26.16px;font-weight:400;color:#404748;letter-spacing:0.000px;transform:scaleX(1.0001);-webkit-text-stroke:0.8px #404748;">Jul 29, 2025</div><div class="t" id="w2" style="left:1218.05px;top:1287.55px;font-size:26.16px;line-height:26.16px;font-weight:400;color:#404748;letter-spacing:0.000px;transform:scaleX(1.1062);-webkit-text-stroke:0.8px #404748;">Web</div><div class="t" id="u2" style="left:1480.72px;top:1287.55px;font-size:26.16px;line-height:26.16px;font-weight:400;color:#404748;letter-spacing:0.000px;transform:scaleX(0.7153);-webkit-text-stroke:0.8px #404748;text-decoration:underline;text-decoration-thickness:2px;text-underline-offset:2px;">1</div><div class="t" id="v2" style="left:1742.10px;top:1287.55px;font-size:26.16px;line-height:26.16px;font-weight:400;color:#404748;letter-spacing:0.000px;transform:scaleX(1.0307);-webkit-text-stroke:0.8px #404748;">35</div><div class="t" id="n3" style="left:515.72px;top:1496.55px;font-size:26.16px;line-height:26.16px;font-weight:400;color:#404748;letter-spacing:0.000px;transform:scaleX(1.1148);-webkit-text-stroke:0.8px #404748;">Checkout</div><div class="t" id="d3" style="left:1016.91px;top:1496.55px;font-size:26.16px;line-height:26.16px;font-weight:400;color:#404748;letter-spacing:0.000px;transform:scaleX(1.0001);-webkit-text-stroke:0.8px #404748;">Jul 29, 2025</div><div class="t" id="w3" style="left:1218.05px;top:1496.55px;font-size:26.16px;line-height:26.16px;font-weight:400;color:#404748;letter-spacing:0.000px;transform:scaleX(1.1062);-webkit-text-stroke:0.8px #404748;">Web</div><div class="t" id="u3" style="left:1480.72px;top:1496.55px;font-size:26.16px;line-height:26.16px;font-weight:400;color:#404748;letter-spacing:0.000px;transform:scaleX(0.7153);-webkit-text-stroke:0.8px #404748;text-decoration:underline;text-decoration-thickness:2px;text-underline-offset:2px;">1</div><div class="t" id="v3" style="left:1719.62px;top:1496.55px;font-size:26.16px;line-height:26.16px;font-weight:400;color:#404748;letter-spacing:0.000px;transform:scaleX(0.9623);-webkit-text-stroke:0.8px #404748;">4.9K</div><div class="t" id="n4" style="left:514.82px;top:1705.05px;font-size:26.16px;line-height:26.16px;font-weight:400;color:#404748;letter-spacing:0.000px;transform:scaleX(1.0576);-webkit-text-stroke:0.8px #404748;">Host Signup</div><div class="t" id="d4" style="left:1016.91px;top:1705.05px;font-size:26.16px;line-height:26.16px;font-weight:400;color:#404748;letter-spacing:0.000px;transform:scaleX(1.0001);-webkit-text-stroke:0.8px #404748;">Jul 29, 2025</div><div class="t" id="w4" style="left:1218.05px;top:1705.05px;font-size:26.16px;line-height:26.16px;font-weight:400;color:#404748;letter-spacing:0.000px;transform:scaleX(1.1062);-webkit-text-stroke:0.8px #404748;">Web</div><div class="t" id="u4" style="left:1430.57px;top:1705.05px;font-size:26.16px;line-height:26.16px;font-weight:400;color:#404748;letter-spacing:0.000px;transform:scaleX(0.9392);-webkit-text-stroke:0.8px #404748;text-decoration:underline;text-decoration-thickness:2px;text-underline-offset:2px;">4,241</div><div class="t" id="v4" style="left:1720.48px;top:1705.05px;font-size:26.16px;line-height:26.16px;font-weight:400;color:#404748;letter-spacing:0.000px;transform:scaleX(0.9539);-webkit-text-stroke:0.8px #404748;">6.9K</div></body></html>
